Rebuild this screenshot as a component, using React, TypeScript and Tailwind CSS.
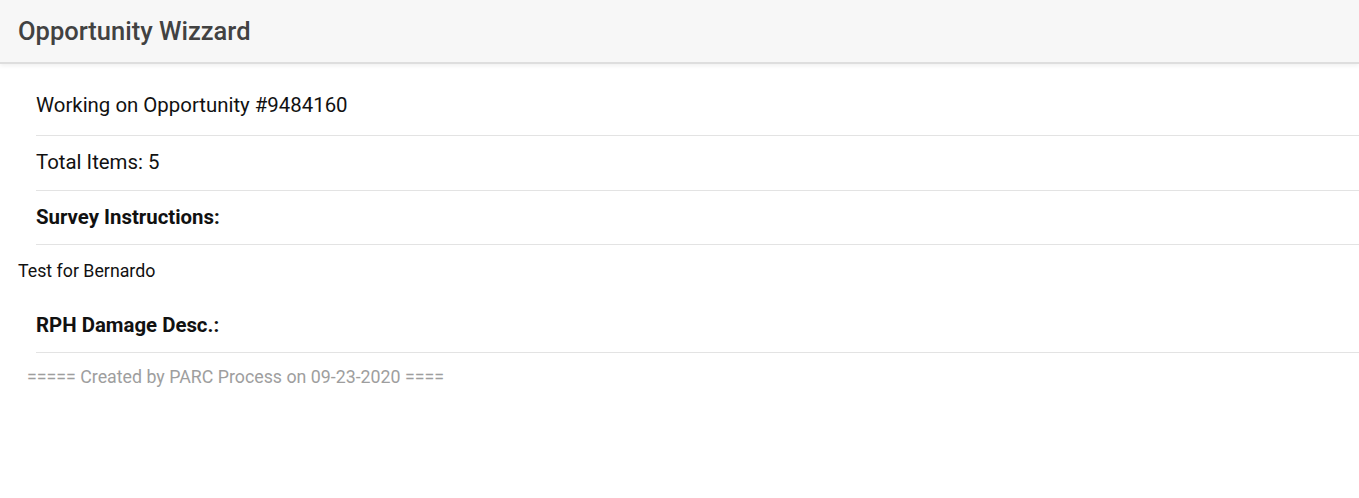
// Opportunity wizard summary: header bar + key/value rows.
const font = { fontFamily: "Roboto, 'Liberation Sans', sans-serif" };

function Row({ children, bold }: { children: React.ReactNode; bold?: boolean }) {
  return (
    <div
      className={`ml-9 flex h-[54px] items-center border-b border-[#e3e3e3] pb-[1px] text-[20.4px] text-[#111] ${
        bold ? "font-bold" : ""
      }`}
    >
      {children}
    </div>
  );
}

export default function App() {
  return (
    <div className="min-h-[498px] w-full bg-white" style={font}>
      <header className="flex h-[64px] items-center border-b-2 border-[#dedede] bg-[#f7f7f7] pl-[18px] shadow-[0_2px_4px_rgba(0,0,0,0.06)]">
        <h1 className="text-[25.5px] font-medium text-[#424242]">Opportunity Wizzard</h1>
      </header>
      <div className="pt-[10px]">
        <div className="ml-9 flex h-[62px] items-center border-b border-[#e3e3e3] pt-[1px] text-[20.4px] text-[#111]">
          Working on Opportunity #9484160
        </div>
        <div className="ml-9 flex h-[55px] items-center border-b border-[#e3e3e3] pb-[2px] text-[20.4px] text-[#111]">
          Total Items: 5
        </div>
        <Row bold>Survey Instructions:</Row>
        <div className="flex h-[54px] items-center pb-[1px] pl-[18px] text-[17.8px] text-[#111]">Test for Bernardo</div>
        <Row bold>RPH Damage Desc.:</Row>
        <div className="flex h-[50px] items-center pb-[1px] pl-[27px] text-[17.8px] text-[#9e9e9e]">
          ===== Created by PARC Process on 09-23-2020 ====
        </div>
      </div>
    </div>
  );
}
